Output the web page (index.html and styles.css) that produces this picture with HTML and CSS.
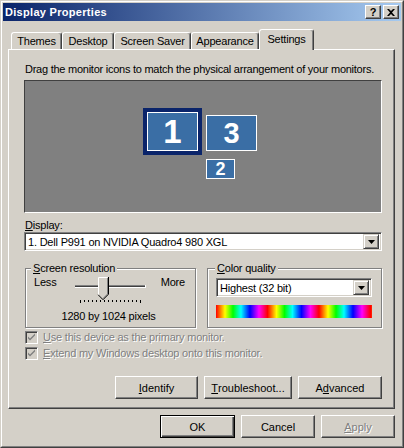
FILE: index.html
```html
<!DOCTYPE html>
<html>
<head>
<meta charset="utf-8">
<link rel="stylesheet" href="styles.css">
</head>
<body>
<div class="window">
  <div class="frame">
    <div class="titlebar">
      <span class="title">Display Properties</span>
      <div class="tb-btns">
        <span class="tb-btn">?</span>
        <span class="tb-btn"><svg width="8" height="7" viewBox="0 0 8 7"><path d="M0 0h2l2 2 2-2h2L5 3.5 8 7H6L4 5 2 7H0l3-3.5z" fill="#000"/></svg></span>
      </div>
    </div>
    <div class="tabs">
      <div class="tab t-themes">Themes</div>
      <div class="tab t-desktop">Desktop</div>
      <div class="tab t-saver">Screen Saver</div>
      <div class="tab t-appear">Appearance</div>
      <div class="tab t-settings active">Settings</div>
    </div>
    <div class="panel">
      <p class="hint">Drag the monitor icons to match the physical arrangement of your monitors.</p>
      <div class="preview">
        <div class="mon mon1"><div class="mon-face">1</div></div>
        <div class="mon mon3">3</div>
        <div class="mon mon2">2</div>
      </div>
      <div class="lbl"><u>D</u>isplay:</div>
      <div class="select">
        <span class="val">1. Dell P991 on NVIDIA Quadro4 980 XGL</span>
        <span class="arrow"><svg width="7" height="4" viewBox="0 0 7 4"><path d="M0 0h7L3.5 4z" fill="#000"/></svg></span>
      </div>
      <div class="groups">
        <fieldset class="group res">
          <legend><u>S</u>creen resolution</legend>
          <div class="slider-row">
            <span class="less">Less</span>
            <svg class="slider" width="80" height="28" viewBox="0 0 80 28">
              <rect x="4" y="10" width="70" height="1" fill="#808080"/>
              <rect x="4" y="11" width="70" height="1" fill="#404040"/>
              <rect x="4" y="12" width="70" height="1" fill="#ffffff"/>
              <rect x="74" y="10" width="1" height="3" fill="#ffffff"/>
              <g fill="#000">
                <rect x="9" y="25" width="1" height="3"/><rect x="13" y="25" width="1" height="2"/><rect x="17" y="25" width="1" height="2"/><rect x="21" y="25" width="1" height="2"/>
                <rect x="25" y="25" width="1" height="2"/><rect x="29" y="25" width="1" height="2"/><rect x="33" y="25" width="1" height="2"/><rect x="37" y="25" width="1" height="2"/>
                <rect x="41" y="25" width="1" height="2"/><rect x="45" y="25" width="1" height="2"/><rect x="49" y="25" width="1" height="2"/><rect x="53" y="25" width="1" height="2"/>
                <rect x="57" y="25" width="1" height="2"/><rect x="61" y="25" width="1" height="2"/><rect x="65" y="25" width="1" height="2"/><rect x="69" y="25" width="1" height="3"/>
              </g>
              <path d="M27 2H37V19L32 24L27 19Z" fill="#d4d0c8"/>
              <path d="M27.5 19.5V2.5H36.5" fill="none" stroke="#fff"/>
              <path d="M36.5 3V19L32 23.5" fill="none" stroke="#808080"/>
              <path d="M37.5 2V19.2L32 24.7L27.2 19.8" fill="none" stroke="#000"/>
            </svg>
            <span class="more">More</span>
          </div>
          <div class="res-caption">1280 by 1024 pixels</div>
        </fieldset>
        <fieldset class="group color">
          <legend><u>C</u>olor quality</legend>
          <div class="select small">
            <span class="val">Highest (32 bit)</span>
            <span class="arrow"><svg width="7" height="4" viewBox="0 0 7 4"><path d="M0 0h7L3.5 4z" fill="#000"/></svg></span>
          </div>
          <div class="colorbar"></div>
        </fieldset>
      </div>
      <div class="checks">
        <div class="check-row"><span class="cbox"><svg width="9" height="9" viewBox="0 0 9 9"><path d="M1 3.5l2 2 5-5v2l-5 5-2-2z" fill="#808080"/></svg></span><span class="dis"><u>U</u>se this device as the primary monitor.</span></div>
        <div class="check-row"><span class="cbox"><svg width="9" height="9" viewBox="0 0 9 9"><path d="M1 3.5l2 2 5-5v2l-5 5-2-2z" fill="#808080"/></svg></span><span class="dis"><u>E</u>xtend my Windows desktop onto this monitor.</span></div>
      </div>
      <div class="actions">
        <button class="btn b-identify"><u>I</u>dentify</button>
        <button class="btn b-trouble"><u>T</u>roubleshoot...</button>
        <button class="btn b-adv">A<u>d</u>vanced</button>
      </div>
    </div>
    <div class="footer">
      <button class="btn default b-foot">OK</button>
      <button class="btn b-foot">Cancel</button>
      <button class="btn b-foot disabled"><u>A</u>pply</button>
    </div>
  </div>
</div>
</body>
</html>
```
FILE: styles.css
```css
html, body {
  margin: 0;
  background: #d4d0c8;
}
body {
  font-family: "Liberation Sans", Arial, sans-serif;
  font-size: 11px;
  letter-spacing: -0.2px;
  color: #000;
}
.window {
  width: 404px;
  height: 448px;
  box-sizing: border-box;
  border: 1px solid;
  border-color: #d4d0c8 #404040 #404040 #d4d0c8;
}
.frame {
  height: 100%;
  box-sizing: border-box;
  border: 1px solid;
  border-color: #fff #808080 #808080 #fff;
  padding: 1px;
  display: flex;
  flex-direction: column;
}
.titlebar {
  height: 18px;
  flex: none;
  background: linear-gradient(90deg, #0a246a, #a6caf0);
  display: flex;
  align-items: center;
  padding: 0 2px;
}
.title {
  flex: 1;
  color: #fff;
  font-weight: bold;
  letter-spacing: 0.3px;
}
.tb-btns {
  display: flex;
  gap: 2px;
}
.tb-btn {
  width: 16px;
  height: 14px;
  box-sizing: border-box;
  background: #d4d0c8;
  border: 1px solid;
  border-color: #fff #404040 #404040 #fff;
  box-shadow: inset -1px -1px #808080;
  display: flex;
  align-items: center;
  justify-content: center;
  font-weight: bold;
  font-size: 11px;
  line-height: 1;
}
.tabs {
  display: flex;
  align-items: flex-end;
  height: 20px;
  margin: 8px 0 0 8px;
  position: relative;
  z-index: 1;
  flex: none;
}
.tab {
  height: 17px;
  box-sizing: border-box;
  border: 1px solid;
  border-bottom: none;
  border-color: #fff #404040 transparent #fff;
  box-shadow: inset -1px 0 #808080;
  border-radius: 3px 3px 0 0;
  display: flex;
  align-items: center;
  justify-content: center;
  background: #d4d0c8;
}
.t-themes { width: 51px; }
.t-desktop { width: 52px; }
.t-saver { width: 77px; }
.t-appear { width: 68px; }
.t-settings { width: 55px; }
.tab.active {
  height: 21px;
  margin-bottom: -1px;
  padding-bottom: 2px;
}
.panel {
  margin-left: 5px;
  width: 387px;
  height: 360px;
  flex: none;
  box-sizing: border-box;
  border: 1px solid;
  border-color: #fff #404040 #404040 #fff;
  box-shadow: inset -1px -1px #808080;
  padding: 12px 12px 0 15px;
}
.hint {
  margin: 0;
  line-height: 14px;
  padding-left: 1px;
  white-space: nowrap;
  letter-spacing: -0.25px;
}
.preview {
  margin-top: 4px;
  height: 133px;
  box-sizing: border-box;
  background: #808080;
  border: 1px solid;
  border-color: #404040 #fff #fff #404040;
  position: relative;
}
.mon {
  position: absolute;
  box-sizing: border-box;
  background: #3a6ea5;
  border: 1px solid #fff;
  color: #fff;
  font-weight: bold;
  letter-spacing: 0;
  display: flex;
  align-items: center;
  justify-content: center;
}
.mon1 {
  left: 118px;
  top: 27px;
  width: 59px;
  height: 47px;
  border: 4px solid #0a246a;
  background: #0a246a;
}
.mon-face {
  width: 100%;
  height: 100%;
  box-sizing: border-box;
  border: 1px solid #fff;
  background: #3a6ea5;
  display: flex;
  align-items: center;
  justify-content: center;
  font-size: 33px;
}
.mon3 {
  left: 181px;
  top: 34px;
  width: 51px;
  height: 36px;
  font-size: 29px;
}
.mon2 {
  left: 181px;
  top: 78px;
  width: 29px;
  height: 20px;
  font-size: 18px;
}
.lbl {
  margin-top: 5px;
  line-height: 14px;
  padding-left: 1px;
}
.select {
  height: 19px;
  box-sizing: border-box;
  background: #fff;
  border: 1px solid;
  border-color: #808080 #fff #fff #808080;
  box-shadow: inset 1px 1px #404040, inset -1px -1px #d4d0c8;
  padding: 2px;
  display: flex;
  align-items: center;
}
.select .val {
  flex: 1;
  padding-left: 1px;
  white-space: nowrap;
}
.arrow {
  width: 16px;
  height: 15px;
  box-sizing: border-box;
  background: #d4d0c8;
  border: 1px solid;
  border-color: #d4d0c8 #404040 #404040 #d4d0c8;
  box-shadow: inset 1px 1px #fff, inset -1px -1px #808080;
  display: flex;
  align-items: center;
  justify-content: center;
}
.groups {
  margin-top: 10px;
  display: flex;
  gap: 11px;
  padding-left: 1px;
}
.group {
  margin: 0;
  box-sizing: border-box;
  border: 1px solid #808080;
  box-shadow: 1px 1px 0 #fff, inset 1px 1px 0 #fff;
  min-width: 0;
}
.group legend {
  padding: 0 2px;
  line-height: 14px;
  background: #d4d0c8;
}
.res {
  width: 171px;
  padding: 0 10px 4px 8px;
}
.res legend { margin-left: -3px; }
.color {
  width: 175px;
  padding: 0 9px 8px 8px;
}
.color legend { margin-left: -1px; }
.slider-row {
  display: flex;
  align-items: flex-start;
  justify-content: space-between;
  line-height: 14px;
}
.slider { display: block; margin-left: 4px; }
.res-caption {
  margin-top: 6px;
  line-height: 14px;
  text-align: center;
  padding-right: 2px;
}
.select.small { margin-top: 3px; }
.colorbar {
  margin-top: 8px;
  height: 13px;
  background: repeating-linear-gradient(90deg,
    #ff0000 0px, #ffff00 9px, #00ff00 17px, #00ffff 25px,
    #0000ff 34px, #ff00ff 43px, #ff0000 51.5px);
}
.checks {
  margin-top: 1px;
}
.check-row {
  height: 16px;
  display: flex;
  align-items: center;
  gap: 5px;
  padding-left: 1px;
}
.cbox {
  width: 13px;
  height: 13px;
  box-sizing: border-box;
  background: #d4d0c8;
  border: 1px solid;
  border-color: #808080 #fff #fff #808080;
  box-shadow: inset 1px 1px #404040, inset -1px -1px #d4d0c8;
  display: flex;
  align-items: center;
  justify-content: center;
}
.dis {
  color: #808080;
  text-shadow: 1px 1px 0 #fff;
}
.actions {
  margin-top: 15px;
  display: flex;
  justify-content: flex-end;
  gap: 6px;
}
.btn {
  height: 23px;
  box-sizing: border-box;
  background: #d4d0c8;
  border: 1px solid;
  border-color: #fff #404040 #404040 #fff;
  box-shadow: inset -1px -1px #808080;
  font: inherit;
  color: #000;
  padding: 0;
  margin: 0;
  display: flex;
  align-items: center;
  justify-content: center;
}
.b-identify { width: 83px; }
.b-trouble { width: 88px; }
.b-adv { width: 84px; }
.footer {
  margin-top: 6px;
  display: flex;
  justify-content: flex-end;
  gap: 6px;
  padding-right: 6px;
}
.b-foot { width: 74px; }
.btn.default {
  width: 75px;
  border: 1px solid #000;
  box-shadow: inset 1px 1px #fff, inset -1px -1px #404040, inset -2px -2px #808080;
}
.btn.disabled {
  color: #808080;
  text-shadow: 1px 1px 0 #fff;
}
```
